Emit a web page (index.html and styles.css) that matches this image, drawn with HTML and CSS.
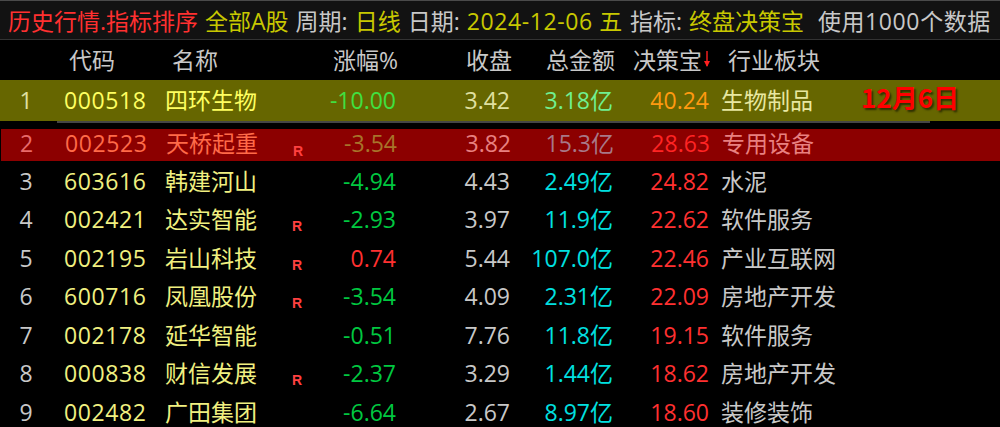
FILE: index.html
```html
<!DOCTYPE html>
<html lang="zh">
<head>
<meta charset="utf-8">
<title>历史行情.指标排序</title>
<link rel="stylesheet" href="styles.css">
</head>
<body>
<div class="titlebar">
  <span class="t-red">历史行情.指标排序</span>
  <span class="t-yel">全部A股</span>
  <span class="t-gray">周期:</span>
  <span class="t-yel">日线</span>
  <span class="t-gray">日期:</span>
  <span class="t-yel t-num">2024-12-06 五</span>
  <span class="t-gray">指标:</span>
  <span class="t-yel">终盘决策宝</span>
  <span class="t-gray t-last t-num">使用1000个数据</span>
</div>
<div class="row head">
  <div></div>
  <div class="l h-code">代码</div>
  <div class="l h-name">名称</div>
  <div></div>
  <div class="r">涨幅%</div>
  <div class="r">收盘</div>
  <div class="r">总金额</div>
  <div class="r">决策宝<svg class="arrow" width="8" height="18" viewBox="0 0 8 18"><path d="M4 1V16" stroke="#ff2020" stroke-width="1.4"/><path d="M1 11L4 17L7 11Z" fill="#ff2020"/></svg></div>
  <div class="l h-ind">行业板块</div>
</div>
<div class="row r1">
  <div class="c idx">1</div>
  <div class="l code">000518</div>
  <div class="l name">四环生物</div>
  <div class="c"></div>
  <div class="r chg">-10.00</div>
  <div class="r cls">3.42</div>
  <div class="r amt">3.18亿</div>
  <div class="r jcb">40.24</div>
  <div class="l ind">生物制品<span class="datemark">12月6日</span></div>
</div>
<div class="sep"></div>
<div class="row r2">
  <div class="c idx">2</div>
  <div class="l code">002523</div>
  <div class="l name">天桥起重</div>
  <div class="c"><span class="rmark">R</span></div>
  <div class="r chg">-3.54</div>
  <div class="r cls">3.82</div>
  <div class="r amt">15.3亿</div>
  <div class="r jcb">28.63</div>
  <div class="l ind">专用设备</div>
</div>
<div class="row">
  <div class="c idx">3</div>
  <div class="l code">603616</div>
  <div class="l name">韩建河山</div>
  <div class="c"></div>
  <div class="r chg down">-4.94</div>
  <div class="r cls">4.43</div>
  <div class="r amt">2.49亿</div>
  <div class="r jcb">24.82</div>
  <div class="l ind">水泥</div>
</div>
<div class="row">
  <div class="c idx">4</div>
  <div class="l code">002421</div>
  <div class="l name">达实智能</div>
  <div class="c"><span class="rmark">R</span></div>
  <div class="r chg down">-2.93</div>
  <div class="r cls">3.97</div>
  <div class="r amt">11.9亿</div>
  <div class="r jcb">22.62</div>
  <div class="l ind">软件服务</div>
</div>
<div class="row">
  <div class="c idx">5</div>
  <div class="l code">002195</div>
  <div class="l name">岩山科技</div>
  <div class="c"><span class="rmark">R</span></div>
  <div class="r chg up">0.74</div>
  <div class="r cls">5.44</div>
  <div class="r amt">107.0亿</div>
  <div class="r jcb">22.46</div>
  <div class="l ind">产业互联网</div>
</div>
<div class="row">
  <div class="c idx">6</div>
  <div class="l code">600716</div>
  <div class="l name">凤凰股份</div>
  <div class="c"><span class="rmark">R</span></div>
  <div class="r chg down">-3.54</div>
  <div class="r cls">4.09</div>
  <div class="r amt">2.31亿</div>
  <div class="r jcb">22.09</div>
  <div class="l ind">房地产开发</div>
</div>
<div class="row">
  <div class="c idx">7</div>
  <div class="l code">002178</div>
  <div class="l name">延华智能</div>
  <div class="c"></div>
  <div class="r chg down">-0.51</div>
  <div class="r cls">7.76</div>
  <div class="r amt">11.8亿</div>
  <div class="r jcb">19.15</div>
  <div class="l ind">软件服务</div>
</div>
<div class="row">
  <div class="c idx">8</div>
  <div class="l code">000838</div>
  <div class="l name">财信发展</div>
  <div class="c"><span class="rmark">R</span></div>
  <div class="r chg down">-2.37</div>
  <div class="r cls">3.29</div>
  <div class="r amt">1.44亿</div>
  <div class="r jcb">18.62</div>
  <div class="l ind">房地产开发</div>
</div>
<div class="row">
  <div class="c idx">9</div>
  <div class="l code">002482</div>
  <div class="l name">广田集团</div>
  <div class="c"></div>
  <div class="r chg down">-6.64</div>
  <div class="r cls">2.67</div>
  <div class="r amt">8.97亿</div>
  <div class="r jcb">18.60</div>
  <div class="l ind">装修装饰</div>
</div>
</body>
</html>
```
FILE: styles.css
```css
html, body {
  margin: 0;
  padding: 0;
  background: #000;
  overflow: hidden;
}
body {
  font-family: "Open Sans", "Noto Sans CJK SC", sans-serif;
  font-size: 23px;
  color: #c8c8c8;
  width: 1000px;
  height: 427px;
}
.titlebar {
  height: 38px;
  border-top: 1px solid #4a4a4a;
  border-bottom: 1px solid #333;
  background: #121212;
  display: flex;
  align-items: center;
  padding-left: 8px;
  gap: 7px;
  white-space: nowrap;
  font-size: 23px;
}
.t-red { color: #ff3030; }
.t-yel { color: #c8c800; }
.t-gray { color: #c8c8c8; }
.t-num { letter-spacing: 0.6px; }
.t-last { margin-left: 7px; }

.row {
  display: grid;
  grid-template-columns: 52px 113px 120px 24px 87px 114px 103px 96px 1fr;
  align-items: center;
  height: 38.5px;
  white-space: nowrap;
}
.row > div { line-height: 1; }
.head { height: 40px; color: #c8c8c8; }
.c { text-align: center; }
.r { text-align: right; }
.l { text-align: left; }
.code { letter-spacing: 0.6px; }
.h-code { padding-left: 17px; letter-spacing: 0; }
.h-name { padding-left: 7px; }
.h-ind { padding-left: 19px; }
.head .r { margin-right: -2px; display: flex; justify-content: flex-end; align-items: center; }
.arrow { margin-left: 1px; margin-bottom: 2px; }

.code { padding-left: 12px; color: #f0f080; }
.name { color: #f0f080; }
.ind { padding-left: 12px; color: #c8c8c8; }
.idx { color: #c8c8c8; }
.cls { color: #c8c8c8; }
.amt { color: #00e0e0; }
.jcb { color: #ff3030; }
.down { color: #00c840; }
.up { color: #ff3030; }

.rmark {
  font-family: "Liberation Sans", sans-serif;
  font-weight: bold;
  font-size: 14px;
  color: #ff4040;
  position: relative;
  top: 3px;
}

.r1 {
  height: 41px;
  background: #666600;
}
.r1 .idx { color: #e0e0a0; }
.r1 .code, .r1 .name { color: #ffff60; }
.r1 .chg { color: #40e040; }
.r1 .cls { color: #e0e0a0; }
.r1 .amt { color: #70f090; }
.r1 .jcb { color: #ff9a10; }
.r1 .ind { color: #e8e8a0; position: relative; }

.datemark {
  position: absolute;
  left: 152px;
  top: -5px;
  font-family: "Noto Sans CJK SC", sans-serif;
  font-weight: bold;
  font-size: 26px;
  color: #ff0000;
  text-shadow: 2px 2px 2px rgba(0,0,0,0.55);
}

.sep {
  height: 2px;
  margin-left: 57px;
  width: 873px;
  background: #454545;
}

.r2 {
  height: 32px;
  margin-top: 6px;
  margin-left: 1px;
  margin-bottom: 1px;
  background: #8c0000;
}
.r2 .idx { color: #e86a6a; margin-left: -1px; }
.r2 .code, .r2 .name { color: #ff6a48; }
.r2 .chg { color: #a8742a; }
.r2 .cls { color: #e88080; }
.r2 .amt { color: #a87888; }
.r2 .jcb { color: #ff2424; }
.r2 .ind { color: #e88080; }
.r2 > div { position: relative; top: -2px; }
.r2 .rmark { top: 4px; }
```
